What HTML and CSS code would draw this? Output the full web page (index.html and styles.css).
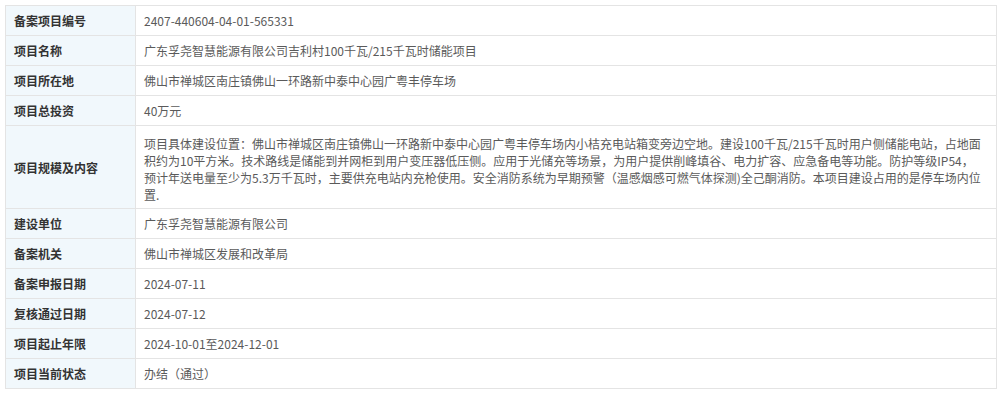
FILE: index.html
```html
<!DOCTYPE html>
<html lang="zh-CN">
<head>
<meta charset="utf-8">
<title>备案项目信息</title>
<link rel="stylesheet" href="styles.css">
</head>
<body>
<table class="info">
  <tbody>
    <tr><th class="label">备案项目编号</th><td class="value">2407-440604-04-01-565331</td></tr>
    <tr><th class="label">项目名称</th><td class="value">广东孚尧智慧能源有限公司吉利村100千瓦/215千瓦时储能项目</td></tr>
    <tr><th class="label">项目所在地</th><td class="value">佛山市禅城区南庄镇佛山一环路新中泰中心园广粤丰停车场</td></tr>
    <tr><th class="label">项目总投资</th><td class="value">40万元</td></tr>
    <tr><th class="label">项目规模及内容</th><td class="value long">项目具体建设位置：佛山市禅城区南庄镇佛山一环路新中泰中心园广粤丰停车场内小桔充电站箱变旁边空地。建设100千瓦/215千瓦时用户侧储能电站，占地面<br>积约为10平方米。技术路线是储能到并网柜到用户变压器低压侧。应用于光储充等场景，为用户提供削峰填谷、电力扩容、应急备电等功能。防护等级IP54，<br>预计年送电量至少为5.3万千瓦时，主要供充电站内充枪使用。安全消防系统为早期预警（温感烟感可燃气体探测)全己酮消防。本项目建设占用的是停车场内位<br>置.</td></tr>
    <tr><th class="label">建设单位</th><td class="value">广东孚尧智慧能源有限公司</td></tr>
    <tr><th class="label">备案机关</th><td class="value">佛山市禅城区发展和改革局</td></tr>
    <tr><th class="label">备案申报日期</th><td class="value">2024-07-11</td></tr>
    <tr><th class="label">复核通过日期</th><td class="value">2024-07-12</td></tr>
    <tr><th class="label">项目起止年限</th><td class="value">2024-10-01至2024-12-01</td></tr>
    <tr><th class="label">项目当前状态</th><td class="value">办结（通过）</td></tr>
  </tbody>
</table>
</body>
</html>
```

FILE: styles.css
```css
html, body {
  margin: 0;
  padding: 0;
  background: #ffffff;
}
body {
  padding: 5px;
  font-family: "Noto Sans CJK SC", "Microsoft YaHei", "Noto Sans", sans-serif;
  font-size: 12px;
}
.info {
  width: 992px;
  border-collapse: collapse;
  table-layout: fixed;
}
.info th,
.info td {
  border: 1px solid #e4e4e4;
  height: 29px;
  padding: 0 8px;
  vertical-align: middle;
  text-align: left;
}
.info .label {
  width: 113px;
  background: #f1f8fc;
  color: #333333;
  font-weight: bold;
}
.info .value {
  color: #5a5a5a;
  font-weight: normal;
}
.info .long {
  line-height: 17px;
  padding-top: 9px;
  padding-bottom: 5px;
  white-space: nowrap;
}
```
